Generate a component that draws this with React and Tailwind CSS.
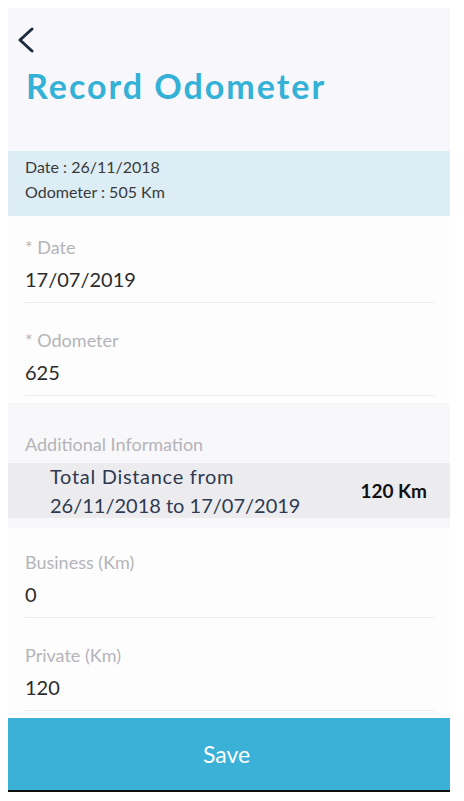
import React from 'react';

// Ligne de saisie avec libellé gris et valeur
function Field({ label, value, top }) {
  return (
    <div className={`mx-[17px] mr-[16px] border-b border-[#ececef] pb-[9px] ${top}`}>
      <div className="text-[18px] leading-[24px] text-[#b4b4b9]">{label}</div>
      <div className="mt-[6px] text-[20px] leading-[28px] text-[#2b2b2b]">{value}</div>
    </div>
  );
}

export default function App() {
  return (
    <div className="min-h-[801px] bg-white pt-2 pl-2" style={{ fontFamily: 'Lato, "Open Sans", sans-serif' }}>
      <div className="flex h-[782px] w-[442px] flex-col">
        {/* En-tête */}
        <div className="h-[143px] bg-[#f7f7fc] pl-[9px]">
          <svg className="mt-[19px] block" width="17" height="26" viewBox="0 0 17 26" fill="none">
            <path d="M15 2 L3 13 L15 24" stroke="#1f2a3d" strokeWidth="3" strokeLinecap="round" strokeLinejoin="round" />
          </svg>
          <h1 className="mt-[13px] pl-[9px] text-[34px] font-bold leading-[40px] tracking-[2px] text-[#33b1d6]">Record Odometer</h1>
        </div>

        {/* Dernier relevé */}
        <div className="h-[65px] bg-[#dcedf5] pl-[17px] pt-[3px] text-[16px] leading-[25px] text-[#3a3a3a]">
          <div>Date : 26/11/2018</div>
          <div>Odometer : 505 Km</div>
        </div>

        {/* Formulaire */}
        <div className="bg-[#fdfdfe] pb-[7px]">
          <Field label="* Date" value="17/07/2019" top="pt-[19px]" />
          <Field label="* Odometer" value="625" top="pt-[25px]" />
        </div>

        {/* Informations supplémentaires */}
        <div className="bg-[#f8f8fa] pt-[29px] pb-[10px]">
          <div className="pl-[17px] text-[18px] leading-[24px] text-[#b4b4b9]">Additional Information</div>
          <div className="mt-[7px] flex h-[55px] items-center justify-between bg-[#ececef] pl-[42px] pr-[23px]">
            <div className="text-[20px] leading-[29px] text-[#2e3a52]">
              <div className="tracking-[0.7px]">Total Distance from</div>
              <div>26/11/2018 to 17/07/2019</div>
            </div>
            <div className="text-[19px] font-bold leading-[24px] text-[#111111]">120 Km</div>
          </div>
        </div>

        <div className="flex-1 bg-[#fdfdfe]">
          <Field label="Business (Km)" value="0" top="pt-[22px]" />
          <Field label="Private (Km)" value="120" top="pt-[25px]" />
        </div>

        <button className="flex h-[72px] items-center justify-center bg-[#3cb1d7] pr-[5px] text-[23px] leading-[30px] text-white">
          Save
        </button>
      </div>
      <div className="h-[2px] w-[442px] bg-[#111111]" />
    </div>
  );
}
